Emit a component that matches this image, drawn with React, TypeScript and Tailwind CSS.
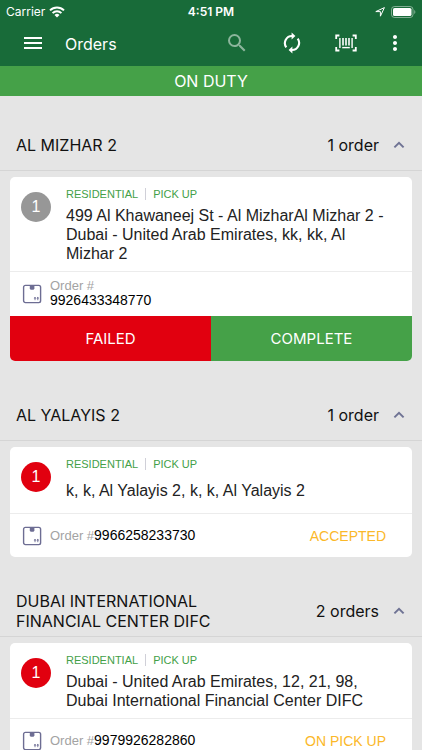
import React, { useState } from 'react';
import { MdMenu, MdMoreVert, MdSearch } from 'react-icons/md';

type OrderStatus = 'ACCEPTED' | 'ON PICK UP';

interface Stop {
  position: number;
  address: string;
  orderNumber: string;
  status?: OrderStatus;
}

interface Area {
  name: string;
  count: string;
  stops: Stop[];
}

const areas: Area[] = [
  {
    name: 'AL MIZHAR 2',
    count: '1 order',
    stops: [
      {
        position: 1,
        address:
          '499 Al Khawaneej St - Al MizharAl Mizhar 2 - Dubai - United Arab Emirates, kk, kk, Al Mizhar 2',
        orderNumber: '9926433348770',
      },
    ],
  },
  {
    name: 'AL YALAYIS 2',
    count: '1 order',
    stops: [
      {
        position: 1,
        address: 'k, k, Al Yalayis 2, k, k, Al Yalayis 2',
        orderNumber: '9966258233730',
        status: 'ACCEPTED',
      },
    ],
  },
  {
    name: 'DUBAI INTERNATIONAL FINANCIAL CENTER DIFC',
    count: '2 orders',
    stops: [
      {
        position: 1,
        address:
          'Dubai - United Arab Emirates, 12, 21, 98, Dubai International Financial Center DIFC',
        orderNumber: '9979926282860',
        status: 'ON PICK UP',
      },
    ],
  },
];

const WifiIcon = () => (
  <svg width="16" height="12" viewBox="0 0 16 12" fill="none" stroke="currentColor" strokeWidth="2">
    <path d="M1 4.4a10 10 0 0 1 14 0" />
    <path d="M3.6 7.1a6.2 6.2 0 0 1 8.8 0" />
    <path d="M8 11.6 5.5 9a3.6 3.6 0 0 1 5 0Z" fill="currentColor" stroke="none" />
  </svg>
);

const LocationIcon = () => (
  <svg width="10" height="10" viewBox="0 0 10 10" fill="none" stroke="currentColor" strokeLinejoin="round">
    <path d="M9.4 0.6 5.4 9.2V4.6H0.8Z" />
  </svg>
);

const BatteryIcon = () => (
  <svg width="25" height="12" viewBox="0 0 25 12">
    <rect x="0.5" y="0.5" width="21.5" height="11" rx="3" fill="none" stroke="#fff" strokeOpacity="0.45" />
    <rect x="2" y="2" width="18.5" height="8" rx="1.6" fill="#fff" />
    <path d="M23.3 4v4c1.4-.6 1.4-3.4 0-4Z" fill="#fff" fillOpacity="0.5" />
  </svg>
);

const RefreshIcon = () => (
  <svg width="18" height="22" viewBox="0 0 18 22" fill="none" stroke="currentColor" strokeWidth="2.1">
    <path d="M9.4 4A7.1 7.1 0 0 0 3.3 15.3" />
    <path d="M8.6 18A7.1 7.1 0 0 0 14.7 6.7" />
    <path d="M8.6 0.6 12.4 4 8.6 7.4ZM9.4 21.4 5.6 18l3.8-3.4Z" fill="currentColor" stroke="none" />
  </svg>
);

const BarcodeIcon = () => (
  <svg width="22" height="18" viewBox="0 0 22 18" fill="none" stroke="currentColor">
    <path d="M4.4 1.5H1.2V5M17.6 1.5h3.2V5M4.4 16.5H1.2V13M17.6 16.5h3.2V13" strokeWidth="1.8" />
    <path d="M4.9 4v10M17.1 4v10" strokeWidth="1.4" />
    <path d="M8 4v7.4M11 4v7.4M14 4v7.4" strokeWidth="1.6" />
    <path d="M7.2 13.6h7.6" strokeWidth="1.4" />
  </svg>
);

const PackageIcon = () => (
  <svg width="20" height="20" viewBox="0 0 20 20" fill="none" stroke="#6d6d93">
    <rect x="1.6" y="1.4" width="17" height="17.2" rx="1.8" strokeWidth="1.4" />
    <path d="M7.8 2h4.6v2.8l-.9.9H8.7l-.9-.9Z" fill="#6d6d93" stroke="none" />
    <path d="M13 16.2v-3M15.8 16.2v-3" strokeWidth="0.9" />
    <path d="m11.7 14.6 1.3-1.8 1.3 1.8ZM14.5 14.6l1.3-1.8 1.3 1.8Z" fill="#6d6d93" stroke="none" />
  </svg>
);

const ChevronIcon = ({ open }: { open: boolean }) => (
  <svg
    width="12"
    height="8"
    viewBox="0 0 12 8"
    fill="none"
    stroke="#6f7394"
    strokeWidth="2"
    className={open ? '' : 'rotate-180'}
  >
    <path d="M1.4 6.4 6 1.9l4.6 4.5" />
  </svg>
);

const StatusBar = () => (
  <div className="grid h-5 grid-cols-3 items-center px-1.5 pt-1 text-xs">
    <div className="flex items-center gap-1">
      <span>Carrier</span>
      <WifiIcon />
    </div>
    <div className="text-center font-semibold">4:51 PM</div>
    <div className="flex items-center justify-end gap-1.5">
      <LocationIcon />
      <BatteryIcon />
    </div>
  </div>
);

const Toolbar = () => (
  <div className="flex h-[46px] items-center pl-[21px] pr-[15px]">
    <button type="button" aria-label="Menu">
      <MdMenu size={24} />
    </button>
    <h1 className="ml-5 mt-0.5 flex-1 text-base">Orders</h1>
    <div className="flex items-center">
      <button type="button" aria-label="Search" className="mr-[34px] opacity-50">
        <MdSearch size={24} />
      </button>
      <button type="button" aria-label="Refresh" className="mr-[34px]">
        <RefreshIcon />
      </button>
      <button type="button" aria-label="Scan barcode" className="mr-[26px]">
        <BarcodeIcon />
      </button>
      <button type="button" aria-label="More">
        <MdMoreVert size={24} />
      </button>
    </div>
  </div>
);

const StopCard = ({ stop }: { stop: Stop }) => (
  <article className="mx-[10px] overflow-hidden rounded-[5px] bg-white font-['Liberation_Sans',sans-serif]">
    <div className="flex pb-2 pl-[11px] pr-4 pt-[9px]">
      <div
        className={`mt-1.5 flex size-[30px] shrink-0 items-center justify-center rounded-full text-base text-white ${
          stop.status ? 'bg-[#e1000f]' : 'bg-[#979797]'
        }`}
      >
        {stop.position}
      </div>
      <div className="ml-[15px] flex-1">
        <div className="flex h-4 items-center text-[11px] text-[#43a047]">
          <span>RESIDENTIAL</span>
          <span className="mx-[7px] h-3 w-px bg-[#d0d0d8]" />
          <span>PICK UP</span>
        </div>
        <div className="mt-1 flex min-h-[29px] items-center">
          <p className="text-base leading-[19px] text-[#222]">{stop.address}</p>
        </div>
      </div>
    </div>
    {stop.status ? (
      <div className="flex h-11 items-center border-t border-[#ececec] pl-3 pr-[26px]">
        <PackageIcon />
        <div className="ml-2 flex-1 text-sm">
          <span className="text-[13px] text-[#a3a3a3]">Order #</span>
          <span className="text-black">{stop.orderNumber}</span>
        </div>
        <div className="text-sm text-[#fbb829]">{stop.status}</div>
      </div>
    ) : (
      <>
        <div className="flex h-[45px] items-center border-t border-[#ececec] pl-3">
          <PackageIcon />
          <div className="ml-2 pb-0.5 text-sm leading-[15px]">
            <div className="text-[13px] leading-[15px] text-[#a3a3a3]">Order #</div>
            <div className="text-black">{stop.orderNumber}</div>
          </div>
        </div>
        <div className="grid h-[45px] grid-cols-2 font-['Inter',sans-serif] text-[15px] text-white">
          <button type="button" className="bg-[#e1000f] pt-0.5">
            FAILED
          </button>
          <button type="button" className="bg-[#45a148] pt-0.5">
            COMPLETE
          </button>
        </div>
      </>
    )}
  </article>
);

const AreaSection = ({ area }: { area: Area }) => {
  const [open, setOpen] = useState(true);

  return (
    <section className="mb-[30px]">
      <button
        type="button"
        aria-expanded={open}
        onClick={() => setOpen(!open)}
        className="flex h-[50px] w-full items-center border-b border-[#d5d5d5] pb-0.5 pl-4 pr-[17px] text-left text-base leading-5 text-[#111]"
      >
        <span className="w-56">{area.name}</span>
        <span className="ml-auto mr-[14px]">{area.count}</span>
        <ChevronIcon open={open} />
      </button>
      {open && (
        <div className="mt-1.5 flex flex-col gap-2">
          {area.stops.map(stop => (
            <StopCard key={stop.orderNumber} stop={stop} />
          ))}
        </div>
      )}
    </section>
  );
};

const App: React.FC = () => (
  <div className="flex h-screen flex-col overflow-hidden bg-[#e5e5e5] font-['Inter',sans-serif]">
    <header className="shrink-0 bg-[#186b39] text-white">
      <StatusBar />
      <Toolbar />
    </header>
    <div className="flex h-[30px] shrink-0 items-center justify-center bg-[#45a148] text-base text-white">
      ON DUTY
    </div>
    <main className="min-h-0 flex-1 overflow-y-auto pt-[25px] [scrollbar-width:none]">
      {areas.map(area => (
        <AreaSection key={area.name} area={area} />
      ))}
    </main>
  </div>
);

export default App;
